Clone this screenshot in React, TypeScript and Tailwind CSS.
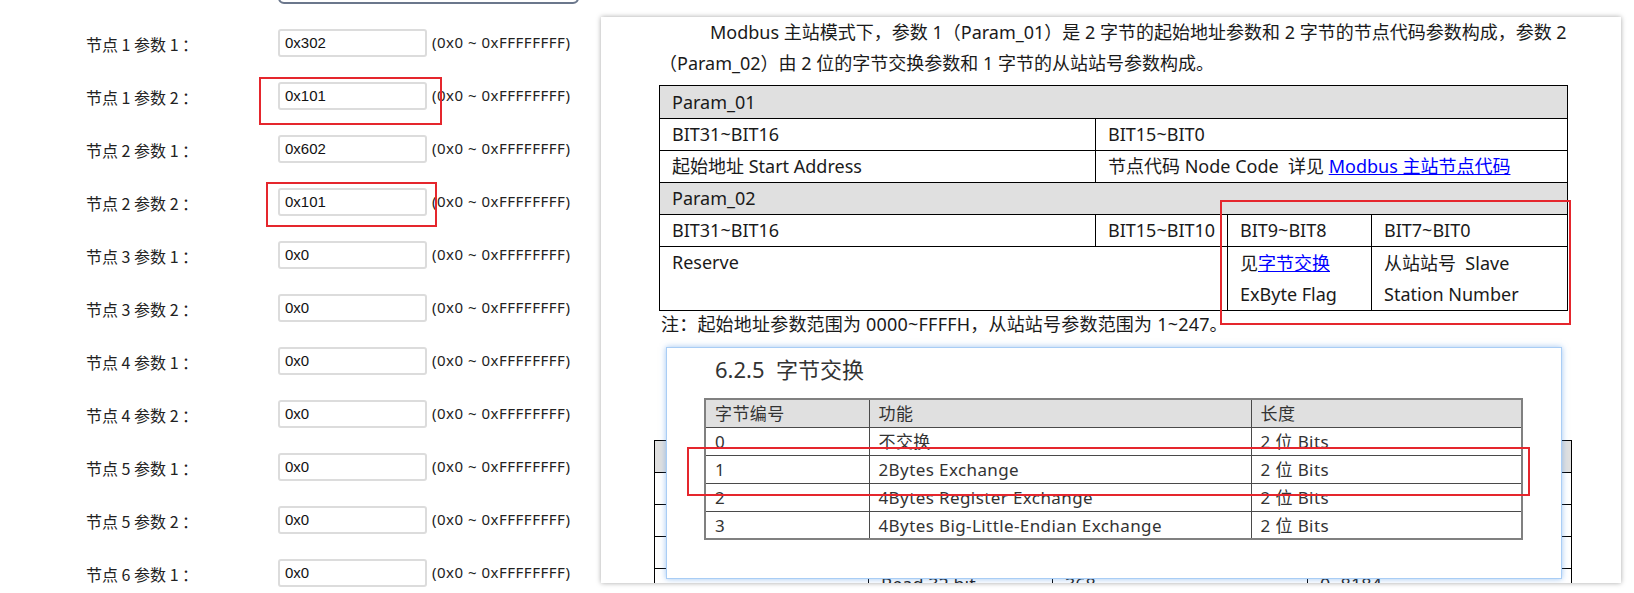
import React from 'react';

const rows = [
  { label: '节点 1 参数 1 ：', value: '0x302' },
  { label: '节点 1 参数 2 ：', value: '0x101' },
  { label: '节点 2 参数 1 ：', value: '0x602' },
  { label: '节点 2 参数 2 ：', value: '0x101' },
  { label: '节点 3 参数 1 ：', value: '0x0' },
  { label: '节点 3 参数 2 ：', value: '0x0' },
  { label: '节点 4 参数 1 ：', value: '0x0' },
  { label: '节点 4 参数 2 ：', value: '0x0' },
  { label: '节点 5 参数 1 ：', value: '0x0' },
  { label: '节点 5 参数 2 ：', value: '0x0' },
  { label: '节点 6 参数 1 ：', value: '0x0' },
];

const exchange = [
  { no: '0', fn: '不交换', len: '2 位 Bits' },
  { no: '1', fn: '2Bytes Exchange', len: '2 位 Bits' },
  { no: '2', fn: '4Bytes Register Exchange', len: '2 位 Bits' },
  { no: '3', fn: '4Bytes Big-Little-Endian Exchange', len: '2 位 Bits' },
];

const cell = 'border border-black px-[12px] py-0 h-[32px] align-middle whitespace-nowrap';
const pcell = 'border border-[#4a4a4a] px-[9px] pt-[2px] pb-0 h-[28px] align-middle whitespace-nowrap';

const App: React.FC = () => {
  return (
    <div className="flex w-[1634px] h-[593px] overflow-hidden bg-white">
      {/* Left: parameter form */}
      <div className="relative w-[601px] shrink-0 font-['Noto_Sans_CJK_SC',sans-serif] text-[#222]">
        <div className="ml-[278px] -mt-[12px] h-[16px] w-[301px] rounded-md border-2 border-[#6b778c]" />
        <div className="mt-[12px]">
          {rows.map((r, i) => (
            <div key={i} className="flex h-[53px] items-center">
              <div className="w-[278px] pl-[86px] pt-[3px] text-[16px]">{r.label}</div>
              <input
                readOnly
                defaultValue={r.value}
                className="h-[28px] w-[149px] rounded-[3px] border-2 border-[#dcdcdc] px-[5px] font-['Liberation_Sans',Arial,sans-serif] text-[15px] text-[#111] outline-none"
              />
              <span className="ml-[5px] font-['Noto_Sans',sans-serif] text-[15px] tracking-[0.5px]">(0x0 ~ 0xFFFFFFFF)</span>
            </div>
          ))}
        </div>
        <div className="absolute left-[259px] top-[77px] h-[48px] w-[183px] border-2 border-[#e5262d]" />
        <div className="absolute left-[266px] top-[182px] h-[45px] w-[171px] border-2 border-[#e5262d]" />
      </div>

      {/* Right: manual excerpt */}
      <div className="relative mt-[17px] h-[566px] w-[1020px] shrink-0 overflow-hidden bg-white text-[18px] leading-[31px] text-[#1a1a1a] shadow-[0_0_5px_rgba(0,0,0,0.35)] font-['Noto_Sans','Noto_Sans_CJK_SC',sans-serif]">
        <p className="whitespace-nowrap pl-[58px] indent-[51px]">
          Modbus 主站模式下，参数 1（Param_01）是 2 字节的起始地址参数和 2 字节的节点代码参数构成，参数 2
          <br />
          （Param_02）由 2 位的字节交换参数和 1 字节的从站站号参数构成。
        </p>

        <table className="ml-[58px] mt-[6px] w-[908px] table-fixed border-collapse">
          <colgroup>
            <col className="w-[436px]" />
            <col className="w-[132px]" />
            <col className="w-[144px]" />
            <col className="w-[196px]" />
          </colgroup>
          <tbody>
            <tr>
              <td colSpan={4} className={`${cell} h-[33px] bg-[#e0e0e0]`}>Param_01</td>
            </tr>
            <tr>
              <td className={cell}>BIT31~BIT16</td>
              <td colSpan={3} className={cell}>BIT15~BIT0</td>
            </tr>
            <tr>
              <td className={cell}>起始地址 Start Address</td>
              <td colSpan={3} className={cell}>
                节点代码 Node Code&nbsp; 详见 <span className="text-[#0000ff] underline">Modbus 主站节点代码</span>
              </td>
            </tr>
            <tr>
              <td colSpan={4} className={`${cell} bg-[#e0e0e0]`}>Param_02</td>
            </tr>
            <tr>
              <td className={cell}>BIT31~BIT16</td>
              <td className={cell}>BIT15~BIT10</td>
              <td className={cell}>BIT9~BIT8</td>
              <td className={cell}>BIT7~BIT0</td>
            </tr>
            <tr>
              <td colSpan={2} className={`${cell} h-[64px] align-top`}>Reserve</td>
              <td className={`${cell} h-[64px]`}>
                见<span className="text-[#0000ff] underline">字节交换</span>
                <br />
                ExByte Flag
              </td>
              <td className={`${cell} h-[64px]`}>
                从站站号&nbsp; Slave
                <br />
                Station Number
              </td>
            </tr>
          </tbody>
        </table>

        <p className="pl-[60px] leading-[26px] tracking-[0.2px]">注：起始地址参数范围为 0000~FFFFH，从站站号参数范围为 1~247。</p>

        {/* underlying document table, mostly covered by the pasted section */}
        <table className="ml-[53px] mt-[103px] w-[917px] table-fixed border-collapse">
          <colgroup>
            <col className="w-[214px]" />
            <col className="w-[184px]" />
            <col className="w-[255px]" />
            <col className="w-[264px]" />
          </colgroup>
          <tbody>
            <tr>
              <td className={`${cell} bg-[#e0e0e0]`}>功能码</td>
              <td className={`${cell} bg-[#e0e0e0]`}>说明</td>
              <td className={`${cell} bg-[#e0e0e0]`}>最大长度</td>
              <td className={`${cell} bg-[#e0e0e0]`}>地址范围</td>
            </tr>
            <tr>
              <td className={cell}>0x01</td>
              <td className={cell}>Read Coils</td>
              <td className={cell}>2048</td>
              <td className={cell}>0~65535</td>
            </tr>
            <tr>
              <td className={cell}>0x02</td>
              <td className={cell}>Read Inputs</td>
              <td className={cell}>2048</td>
              <td className={cell}>0~65535</td>
            </tr>
            <tr>
              <td className={cell}>0x03</td>
              <td className={cell}>Read Registers</td>
              <td className={cell}>736</td>
              <td className={cell}>0~65535</td>
            </tr>
            <tr>
              <td className={cell}></td>
              <td className={cell}>Read 32 bit</td>
              <td className={cell}>368</td>
              <td className={cell}>0~8184</td>
            </tr>
          </tbody>
        </table>

        {/* pasted section 6.2.5 */}
        <div className="absolute left-[65px] top-[330px] h-[232px] w-[896px] border border-[#a9cdf5] bg-white text-[#333] shadow-[0_0_6px_rgba(80,150,230,0.55)]">
          <h3 className="pl-[48px] pt-[7px] text-[22px] leading-[28px]">6.2.5&nbsp; 字节交换</h3>
          <table className="ml-[37px] mt-[15px] w-[817px] table-fixed border-collapse border-2 border-[#808080] text-[17px] leading-[20px] tracking-[0.4px]">
            <colgroup>
              <col className="w-[164px]" />
              <col className="w-[382px]" />
              <col className="w-[271px]" />
            </colgroup>
            <tbody>
              <tr className="bg-[#e0e0e0]">
                <td className={pcell}>字节编号</td>
                <td className={pcell}>功能</td>
                <td className={pcell}>长度</td>
              </tr>
              {exchange.map((e) => (
                <tr key={e.no}>
                  <td className={pcell}>{e.no}</td>
                  <td className={pcell}>{e.fn}</td>
                  <td className={pcell}>{e.len}</td>
                </tr>
              ))}
            </tbody>
          </table>
        </div>

        {/* annotations */}
        <div className="absolute left-[619px] top-[183px] h-[125px] w-[351px] border-2 border-[#e5262d]" />
        <div className="absolute left-[86px] top-[430px] h-[49px] w-[843px] border-2 border-[#e5262d]" />
      </div>
    </div>
  );
};

export default App;
